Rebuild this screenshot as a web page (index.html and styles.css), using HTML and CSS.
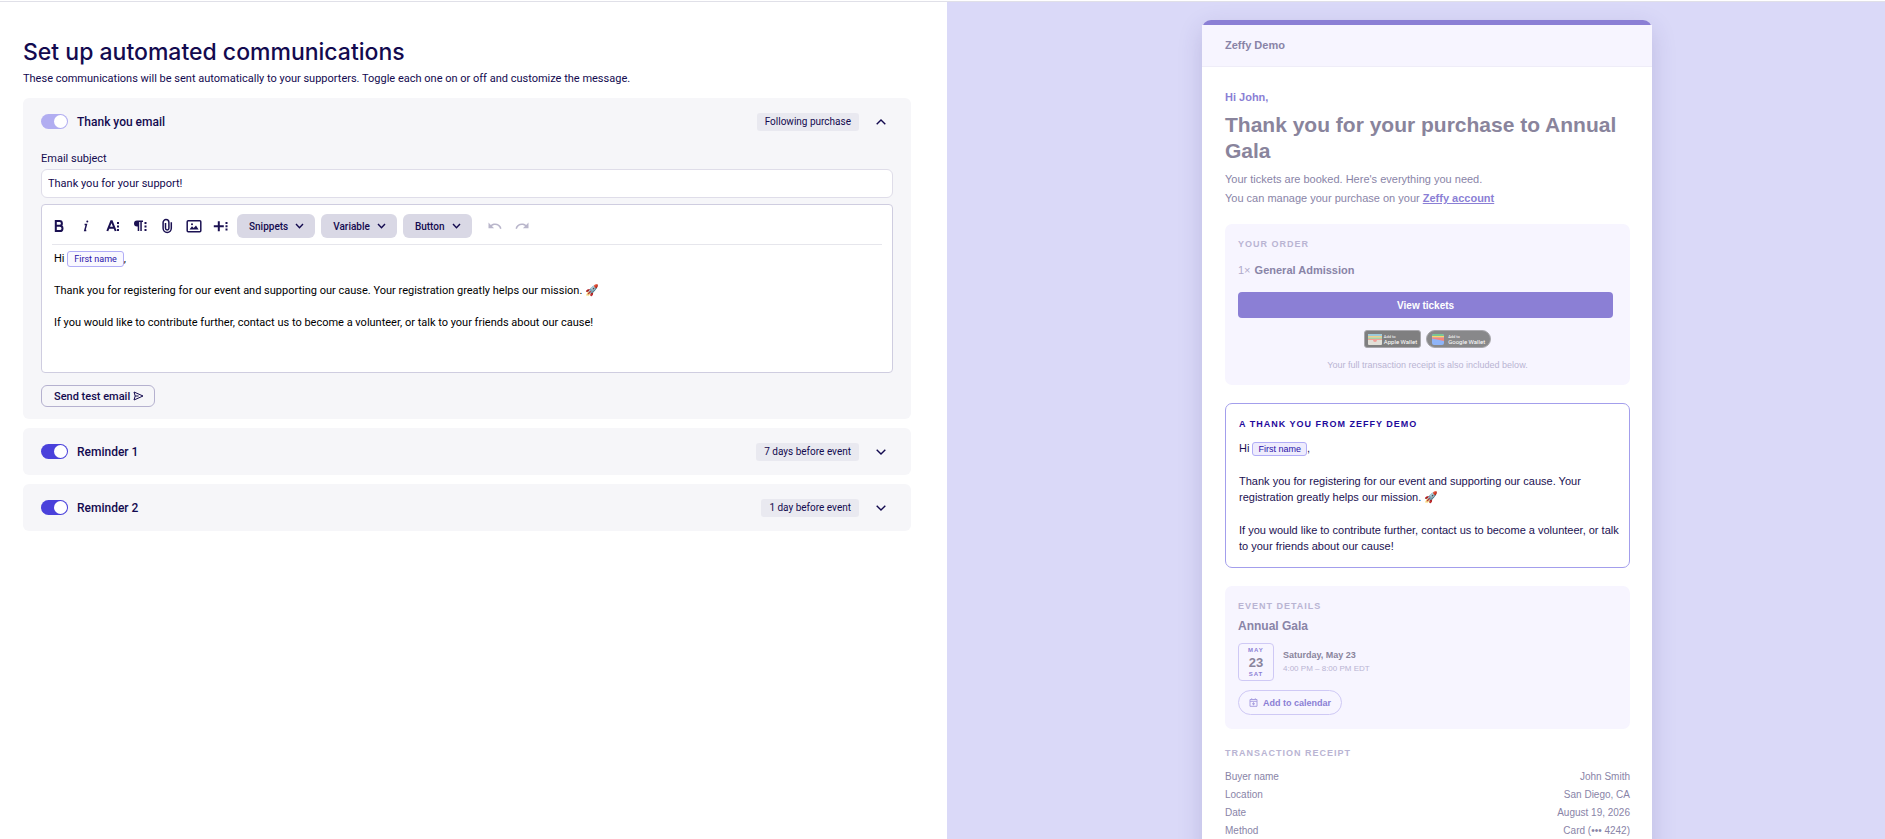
FILE: index.html
```
<!DOCTYPE html>
<html lang="en">
<head>
    <meta charset="UTF-8">
    <meta name="viewport" content="width=device-width, initial-scale=1.0">
    <title>Automated communications</title>
    <link rel="stylesheet" href="styles.css">
</head>
<body>
    <main class="settings">
        <h1>Set up automated communications</h1>
        <p class="intro">These communications will be sent automatically to your supporters. Toggle each one on or off and customize the message.</p>

        <section class="card card-open">
            <div class="card-head">
                <input type="checkbox" class="toggle" id="thankYou" checked disabled>
                <label class="card-title" for="thankYou">Thank you email</label>
                <span class="badge">Following purchase</span>
                <button class="expand" aria-label="Collapse">
                    <svg width="10" height="6" viewBox="0 0 10 6"><path d="M.7 5.3 5 1l4.3 4.3"/></svg>
                </button>
            </div>
            <label class="field-label" for="subject">Email subject</label>
            <input type="text" class="subject" id="subject" value="Thank you for your support!">

            <div class="editor">
                <div class="toolbar">
                    <button class="tool" aria-label="Bold">
                        <svg width="16" height="16" viewBox="0 0 16 16"><path class="line" d="M4.8 3h3.7a2.4 2.4 0 0 1 0 4.8H4.8zM4.8 7.8h4.1a2.6 2.6 0 0 1 0 5.2H4.8z"/></svg>
                    </button>
                    <button class="tool" aria-label="Italic">
                        <svg width="16" height="16" viewBox="0 0 16 16"><path class="thin" d="M6.6 6.6h1.8L6.8 12.6h1.5"/><circle cx="9.3" cy="3.6" r="1"/></svg>
                    </button>
                    <button class="tool" aria-label="Text options">
                        <svg width="16" height="16" viewBox="0 0 16 16"><path class="line" d="M2.3 13 6.2 3.2h.6L10.7 13M3.8 9.7h5.4"/><path d="M12 4h2v2h-2zM12 7.5h2v2h-2zM12 11h2v2h-2z"/></svg>
                    </button>
                    <button class="tool" aria-label="Paragraph options">
                        <svg width="16" height="16" viewBox="0 0 16 16"><path d="M5 2.5h6v1.6H9.8V13H8.3V4.1H7.2V13H5.7V8.5H5a3 3 0 0 1 0-6zM12.5 4h2v2h-2zM12.5 7.5h2v2h-2zM12.5 11h2v2h-2z"/></svg>
                    </button>
                    <button class="tool" aria-label="Attach file">
                        <svg width="16" height="16" viewBox="0 0 16 16"><path class="thin" d="M12.3 4.2v6.1a4.1 4.1 0 0 1-8.2 0V4.5a2.9 2.9 0 0 1 5.8 0v5.8a1.7 1.7 0 0 1-3.4 0V5"/></svg>
                    </button>
                    <button class="tool" aria-label="Insert image">
                        <svg width="16" height="16" viewBox="0 0 16 16"><rect class="thin" x="1.2" y="2.7" width="13.6" height="11" rx="1"/><path d="M3.5 11.5 6 8.3l1.7 1.6L10 7.5l2.6 4z"/><circle cx="6" cy="6.2" r="1"/></svg>
                    </button>
                    <button class="tool" aria-label="More">
                        <svg width="16" height="16" viewBox="0 0 16 16"><path class="line" d="M.8 8.3h10M5.8 3.3v10"/><path d="M12.5 4h2v2h-2zM12.5 7.3h2v2h-2zM12.5 10.6h2v2h-2z"/></svg>
                    </button>
                    <button class="menu">Snippets <svg width="9" height="6" viewBox="0 0 9 6"><path d="M1 1l3.5 3.7L8 1"/></svg></button>
                    <button class="menu">Variable <svg width="9" height="6" viewBox="0 0 9 6"><path d="M1 1l3.5 3.7L8 1"/></svg></button>
                    <button class="menu">Button <svg width="9" height="6" viewBox="0 0 9 6"><path d="M1 1l3.5 3.7L8 1"/></svg></button>
                    <button class="tool history" aria-label="Undo" disabled>
                        <svg width="14" height="8" viewBox="0 0 14 8"><path d="M.5.5v5.8h5.6L3.9 4.1A5 5 0 0 1 12 7l1.5-.5A6.6 6.6 0 0 0 2.8 3z"/></svg>
                    </button>
                    <button class="tool history" aria-label="Redo" disabled>
                        <svg width="14" height="8" viewBox="0 0 14 8"><path d="M13.5.5v5.8H7.9l2.2-2.2A5 5 0 0 0 2 7L.5 6.5A6.6 6.6 0 0 1 11.2 3z"/></svg>
                    </button>
                </div>
                <div class="editor-body" contenteditable="true" spellcheck="false">
                    <p>Hi <span class="variable">First name</span>,</p>
                    <p>Thank you for registering for our event and supporting our cause. Your registration greatly helps our mission. 🚀</p>
                    <p>If you would like to contribute further, contact us to become a volunteer, or talk to your friends about our cause!</p>
                </div>
            </div>

            <button class="send-test">Send test email
                <svg width="11" height="10" viewBox="0 0 11 10"><path d="M1 1 10 5 1 9l1.2-4zM2.2 5h3.4"/></svg>
            </button>
        </section>

        <section class="card">
            <div class="card-head">
                <input type="checkbox" class="toggle" id="reminder1" checked>
                <label class="card-title" for="reminder1">Reminder 1</label>
                <span class="badge">7 days before event</span>
                <button class="expand" aria-label="Expand">
                    <svg width="10" height="6" viewBox="0 0 10 6"><path d="M.7.7 5 5 9.3.7"/></svg>
                </button>
            </div>
        </section>

        <section class="card">
            <div class="card-head">
                <input type="checkbox" class="toggle" id="reminder2" checked>
                <label class="card-title" for="reminder2">Reminder 2</label>
                <span class="badge">1 day before event</span>
                <button class="expand" aria-label="Expand">
                    <svg width="10" height="6" viewBox="0 0 10 6"><path d="M.7.7 5 5 9.3.7"/></svg>
                </button>
            </div>
        </section>
    </main>

    <aside class="preview">
        <article class="email">
            <header class="email-head">Zeffy Demo</header>
            <div class="email-body">
                <p class="greeting">Hi John,</p>
                <h2>Thank you for your purchase to Annual Gala</h2>
                <p class="lead">Your tickets are booked. Here's everything you need.</p>
                <p class="lead">You can manage your purchase on your <a href="#">Zeffy account</a></p>

                <section class="box order">
                    <h3>YOUR ORDER</h3>
                    <p class="ticket"><span>1×</span> General Admission</p>
                    <button class="view">View tickets</button>
                    <div class="wallets">
                        <a href="#" class="wallet apple">
                            <svg width="14" height="11" viewBox="0 0 14 11"><rect width="14" height="11" rx="1" fill="#e2e0d8"/><path d="M0 1a1 1 0 0 1 1-1h12a1 1 0 0 1 1 1v1H0z" fill="#9ccbdc"/><path d="M0 2h14v1.5H0z" fill="#f0cf8b"/><path d="M0 3.5h14V5H0z" fill="#a9d3a6"/><path d="M0 5h14v1H9a2 2 0 0 1-4 0H0z" fill="#f2a09a"/></svg>
                            <span><small>Add to</small>Apple Wallet</span>
                        </a>
                        <a href="#" class="wallet google">
                            <svg width="12" height="11" viewBox="0 0 12 11"><rect width="12" height="11" rx="2" fill="#8fb4f8"/><path d="M0 2a2 2 0 0 1 2-2h8a2 2 0 0 1 2 2H0z" fill="#79c693"/><path d="M0 2h12v1.5H0z" fill="#fbd66b"/><path d="M0 3.5h12V7L0 4.5z" fill="#f5857e"/></svg>
                            <span><small>Add to</small>Google Wallet</span>
                        </a>
                    </div>
                    <p class="note">Your full transaction receipt is also included below.</p>
                </section>

                <section class="message">
                    <h3>A THANK YOU FROM ZEFFY DEMO</h3>
                    <p>Hi <span class="variable">First name</span>,</p>
                    <p>Thank you for registering for our event and supporting our cause. Your registration greatly helps our mission. 🚀</p>
                    <p>If you would like to contribute further, contact us to become a volunteer, or talk to your friends about our cause!</p>
                </section>

                <section class="box details">
                    <h3>EVENT DETAILS</h3>
                    <p class="event-name">Annual Gala</p>
                    <div class="when">
                        <div class="date"><span>MAY</span><b>23</b><span>SAT</span></div>
                        <div>
                            <p class="day">Saturday, May 23</p>
                            <p class="time">4:00 PM – 8:00 PM EDT</p>
                        </div>
                    </div>
                    <button class="calendar">
                        <svg width="9" height="9" viewBox="0 0 9 9"><path d="M1 1.5h7v6.8H1zM1 3.3h7M2.7.3v1.5M6.3.3v1.5M3 5.8h3M4.5 4.3v3"/></svg>
                        Add to calendar
                    </button>
                </section>

                <section class="receipt">
                    <h3>TRANSACTION RECEIPT</h3>
                    <table>
                        <tr><th>Buyer name</th><td>John Smith</td></tr>
                        <tr><th>Location</th><td>San Diego, CA</td></tr>
                        <tr><th>Date</th><td>August 19, 2026</td></tr>
                        <tr><th>Method</th><td>Card (••• 4242)</td></tr>
                    </table>
                </section>
            </div>
        </article>
    </aside>
</body>
</html>
```
FILE: styles.css
```
* {
    box-sizing: border-box;
}

body {
    margin: 1px 0 0;
    height: 100vh;
    overflow: hidden;
    display: grid;
    grid-template-columns: 947fr 938fr;
    border-top: 1px solid #e0e0e8;
    background: white;
    font-family: Roboto, sans-serif;
    font-size: 11px;
    color: #130a4f;
}

h1, h2, h3, p {
    margin: 0;
}

button {
    font: inherit;
    color: inherit;
    cursor: pointer;
}

/* left side */
.settings {
    padding: 34px 36px 0 23px;
}

h1 {
    font-family: Inter, sans-serif;
    font-size: 23px;
    font-weight: 500;
    line-height: 32px;
}

.intro {
    margin: 3px 0 11px;
    line-height: 16px;
}

.card {
    margin-bottom: 9px;
    padding: 14px 18px;
    background: #f6f6f9;
    border-radius: 6px;
}

.card-open {
    padding-bottom: 12px;
}

.card-head {
    display: flex;
    align-items: center;
    height: 19px;
}

.toggle {
    appearance: none;
    display: flex;
    justify-content: flex-end;
    width: 27px;
    height: 15px;
    margin: 0 9px 0 0;
    padding: 1px;
    border-radius: 8px;
    background: #4a41db;
}

.toggle::before {
    content: "";
    width: 13px;
    height: 13px;
    border-radius: 50%;
    background: white;
}

.toggle:disabled {
    background: #b1adf1;
}

.card-title {
    flex: 1;
    font-size: 12px;
    font-weight: 500;
}

.badge {
    padding: 0 8px;
    font-size: 10px;
    line-height: 18px;
    border-radius: 3px;
    background: #e9e9f0;
}

.expand {
    display: flex;
    justify-content: center;
    width: 24px;
    margin: 0 0 0 10px;
    padding: 4px 0;
    border: none;
    background: none;
}

.expand svg, .menu svg, .send-test svg {
    fill: none;
    stroke: currentColor;
    stroke-width: 1.4;
}

.field-label {
    display: block;
    margin: 20px 0 2px;
    line-height: 16px;
}

.subject {
    display: block;
    width: 100%;
    height: 29px;
    padding: 0 6px;
    border: 1px solid #dfdde9;
    border-radius: 6px;
    font: inherit;
    color: inherit;
}

.editor {
    height: 169px;
    margin: 6px 0 12px;
    padding: 0 10px;
    background: white;
    border: 1px solid #cfcde0;
    border-radius: 4px;
}

.toolbar {
    display: flex;
    align-items: center;
    height: 40px;
    padding-top: 3px;
    border-bottom: 1px solid #e6e6ec;
}

.tool {
    display: flex;
    align-items: center;
    justify-content: center;
    width: 27px;
    height: 24px;
    padding: 0;
    border: none;
    background: none;
    fill: #1b1152;
}

.tool:first-child {
    margin-left: -7px;
}

.tool .line {
    fill: none;
    stroke: #1b1152;
    stroke-width: 2;
}

.tool .thin {
    fill: none;
    stroke: #1b1152;
    stroke-width: 1.5;
}

.menu {
    display: flex;
    align-items: center;
    gap: 7px;
    height: 24px;
    margin-right: 6px;
    padding: 0 11px 0 12px;
    border: none;
    border-radius: 6px;
    background: #d9d8e5;
    font-size: 10px;
    font-weight: 500;
}

.tool + .menu {
    margin-left: 3px;
}

.history {
    fill: #b9b6cb;
    cursor: default;
}

.menu + .history {
    margin-left: 4px;
}

.editor-body {
    padding: 6px 2px;
    line-height: 16px;
    color: black;
    outline: none;
}

.editor-body p {
    margin-bottom: 16px;
}

.variable {
    display: inline-block;
    padding: 0 6px;
    font-size: 9px;
    line-height: 14px;
    border: 1px solid #b1adf6;
    border-radius: 3px;
    background: #f9f8ff;
    color: #2a12a8;
}

.send-test {
    display: flex;
    align-items: center;
    gap: 3px;
    height: 22px;
    padding: 0 10px 0 12px;
    border: 1px solid #b5b1cf;
    border-radius: 6px;
    background: none;
    font-weight: 500;
}

.send-test svg {
    stroke-width: 1;
}

/* email preview */
.preview {
    padding: 18px 0 0 22px;
    background: #dad9f8;
    font-family: "Liberation Sans", sans-serif;
}

.email {
    width: 48%;
    min-width: 450px;
    height: 100vh;
    margin: 0 auto;
    border-top: 5px solid #8b7fd5;
    border-radius: 9px;
    background: white;
    box-shadow: 0 8px 24px rgba(60, 50, 130, 0.18);
}

.email-head {
    padding: 0 23px;
    line-height: 41px;
    background: #f7f5ff;
    border-bottom: 1px solid #efedf8;
    font-weight: bold;
    color: #8984a7;
}

.email-body {
    padding: 22px 22px 0 23px;
}

.greeting {
    line-height: 16px;
    font-weight: bold;
    color: #8b7fd5;
}

h2 {
    margin: 7px 0 6px;
    font-size: 21px;
    line-height: 26px;
    color: #89849c;
}

.lead {
    line-height: 19px;
    color: #8984a7;
}

.lead a {
    font-weight: bold;
    color: #8b7fd5;
}

h3 {
    font-size: 9px;
    line-height: 14px;
    letter-spacing: 1px;
    color: #b9b4d3;
}

.box {
    padding: 13px;
    border-radius: 7px;
    background: #f7f5ff;
}

.order {
    height: 161px;
    margin: 16px 0 18px;
    text-align: center;
}

.order h3, .ticket {
    text-align: left;
}

.ticket {
    margin: 11px 0 14px;
    line-height: 16px;
    font-weight: bold;
    color: #8984a7;
}

.ticket span {
    margin-right: 1px;
    font-weight: normal;
    color: #b0abca;
}

.view {
    display: block;
    width: 99%;
    height: 26px;
    padding: 0;
    border: none;
    border-radius: 4px;
    background: #8b7fd5;
    font-size: 10px;
    font-weight: bold;
    color: white;
}

.wallets {
    display: flex;
    justify-content: center;
    gap: 5px;
    margin: 12px 0 9px;
}

.wallet {
    display: flex;
    align-items: center;
    gap: 2px;
    height: 18px;
    padding: 0 3px;
    border: 1px solid #a9a8ad;
    border-radius: 3px;
    background: #7f7f80;
    color: white;
    font-family: Roboto, sans-serif;
    font-size: 6px;
    line-height: 6px;
    text-align: left;
    text-decoration: none;
}

.wallet small {
    display: block;
    font-size: 4px;
    line-height: 5px;
}

.google {
    gap: 4px;
    padding: 0 5px;
    border-radius: 9px;
    background: #88888a;
}

.note {
    font-size: 9px;
    line-height: 16px;
    color: #b9b4d3;
}

.message {
    height: 165px;
    margin-bottom: 18px;
    padding: 13px 8px 13px 13px;
    border: 1px solid #a39eec;
    border-radius: 7px;
    color: #1b1152;
}

.message h3 {
    margin-bottom: 9px;
    color: #1f0a9c;
}

.message p {
    margin-bottom: 17px;
    line-height: 16px;
}

.message .variable {
    padding: 0 5px;
    line-height: 12px;
    background: #eeecfd;
}

.details {
    height: 143px;
}

.event-name {
    margin: 4px 0 8px;
    font-size: 12px;
    line-height: 18px;
    font-weight: bold;
    color: #8984a7;
}

.when {
    display: flex;
    align-items: center;
    gap: 9px;
}

.date {
    display: flex;
    flex-direction: column;
    align-items: center;
    width: 36px;
    height: 38px;
    padding-top: 1px;
    border: 1px solid #cfc9f5;
    border-radius: 4px;
    color: #89849c;
}

.date span {
    font-size: 6px;
    line-height: 11px;
    font-weight: bold;
    letter-spacing: 1px;
    color: #8b7fd5;
}

.date b {
    font-size: 13px;
    line-height: 13px;
}

.day {
    font-size: 9px;
    line-height: 13px;
    font-weight: bold;
    color: #89849c;
}

.time {
    font-size: 8px;
    line-height: 13px;
    color: #b9b4d3;
}

.calendar {
    display: flex;
    align-items: center;
    gap: 5px;
    height: 25px;
    margin-top: 9px;
    padding: 0 10px;
    border: 1px solid #cfc9f5;
    border-radius: 13px;
    background: none;
    font-size: 9px;
    font-weight: bold;
    color: #8b7fd5;
}

.calendar svg {
    fill: none;
    stroke: #a9a0e0;
}

.receipt h3 {
    margin: 17px 0 8px;
}

table {
    width: 100%;
    border-collapse: collapse;
    font-size: 10px;
    color: #8984a7;
}

th, td {
    padding: 0;
    line-height: 18px;
    text-align: left;
    font-weight: normal;
}

td {
    text-align: right;
}
```
